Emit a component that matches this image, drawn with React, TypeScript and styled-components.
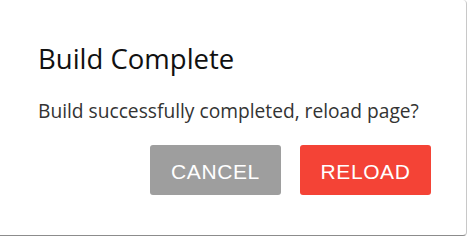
import React from 'react'
import styled, { createGlobalStyle } from 'styled-components'

const GlobalStyle = createGlobalStyle`
  html, body {
    margin: 0;
    padding: 0;
    background: #ffffff;
  }
`

const Dialog = styled.div`
  box-sizing: border-box;
  width: 467px;
  height: 236px;
  background: #ffffff;
  border-radius: 0 4px 4px 0;
  border-right: 1px solid #c8c8c8;
  border-bottom: 1px solid #8c8c8c;
  padding: 40px 35px 0 38px;
  display: flex;
  flex-direction: column;
  font-family: 'Open Sans', 'Noto Sans', sans-serif;
`

const Title = styled.h2`
  margin: 0;
  font-weight: 400;
  font-size: 27.5px;
  line-height: 38px;
  color: #111111;
`

const Message = styled.p`
  margin: 20px 0 0;
  font-size: 19.2px;
  line-height: 26px;
  color: #333333;
`

const Actions = styled.div`
  display: flex;
  justify-content: flex-end;
  gap: 19px;
  margin-top: 21px;
`

const Button = styled.button<{ $tone: 'muted' | 'danger' }>`
  height: 50px;
  min-width: 131px;
  padding: 3px 20px 0;
  border: none;
  border-radius: 3px;
  background: ${(p) => (p.$tone === 'danger' ? '#f44336' : '#9e9e9e')};
  color: #ffffff;
  font-family: 'Liberation Sans', Arial, sans-serif;
  font-size: 21px;
  font-weight: 400;
  letter-spacing: 0.6px;
  text-transform: uppercase;
  cursor: pointer;
`

export default function App() {
  return (
    <>
      <GlobalStyle />
      <Dialog>
        <Title>Build Complete</Title>
        <Message>Build successfully completed, reload page?</Message>
        <Actions>
          <Button $tone="muted">Cancel</Button>
          <Button $tone="danger">Reload</Button>
        </Actions>
      </Dialog>
    </>
  )
}
